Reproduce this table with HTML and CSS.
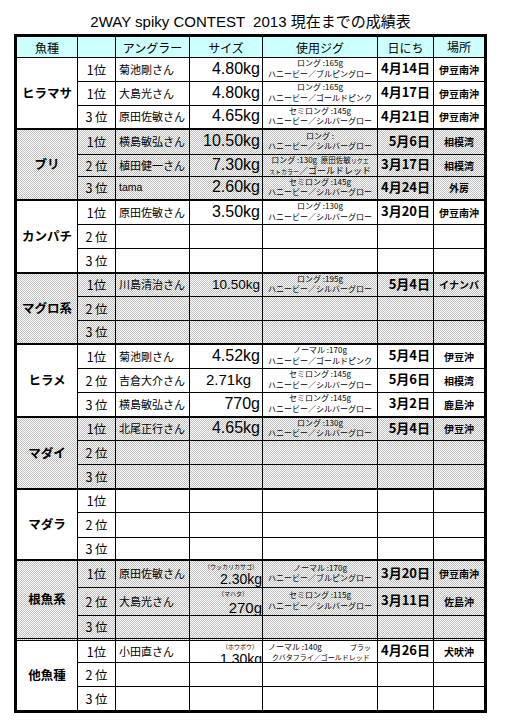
FILE: index.html
```html
<!DOCTYPE html>
<html lang="ja">
<head>
<meta charset="utf-8">
<title>2WAY spiky CONTEST 2013</title>
<link rel="stylesheet" href="styles.css">
</head>
<body>
<div class="page">
  <h1 class="title">2WAY spiky CONTEST  2013 現在までの成績表</h1>
  <div class="sheet">
    <div class="c hd">魚種</div>
    <div class="c hd"></div>
    <div class="c hd">アングラー</div>
    <div class="c hd">サイズ</div>
    <div class="c hd">使用ジグ</div>
    <div class="c hd">日にち</div>
    <div class="c hd pl">場所</div>

    <div class="grp">
      <div class="c fish">ヒラマサ</div>
      <div class="c rk">1位</div><div class="c nm">菊池剛さん</div><div class="c sz">4.80kg</div><div class="c jg"><span>ロング :165g</span><span>ハニービー／ブルピングロー</span></div><div class="c dt">4月14日</div><div class="c pl">伊豆南沖</div>
      <div class="c rk">1位</div><div class="c nm">大島光さん</div><div class="c sz">4.80kg</div><div class="c jg"><span>ロング :165g</span><span>ハニービー／ゴールドピンク</span></div><div class="c dt">4月17日</div><div class="c pl">伊豆南沖</div>
      <div class="c rk">3 位</div><div class="c nm">原田佐敏さん</div><div class="c sz">4.65kg</div><div class="c jg"><span>セミロング :145g</span><span>ハニービー／シルバーグロー</span></div><div class="c dt">4月21日</div><div class="c pl">伊豆南沖</div>
    </div>

    <div class="grp shade">
      <div class="c fish">ブリ</div>
      <div class="c rk">1位</div><div class="c nm">横島敏弘さん</div><div class="c sz">10.50kg</div><div class="c jg"><span>ロング :</span><span>ハニービー／シルバーグロー</span></div><div class="c dt">5月6日</div><div class="c pl">相模湾</div>
      <div class="c rk">2 位</div><div class="c nm">植田健一さん</div><div class="c sz">7.30kg</div><div class="c jg tight"><span class="req">ロング :130g  <i>原田佐敏</i><small>リクエ</small></span><span><small>ストカラー</small><big>／ゴールドレッド</big></span></div><div class="c dt">3月17日</div><div class="c pl">相模湾</div>
      <div class="c rk">3 位</div><div class="c nm lat">tama</div><div class="c sz">2.60kg</div><div class="c jg"><span>セミロング :145g</span><span>ハニービー／シルバーグロー</span></div><div class="c dt">4月24日</div><div class="c pl">外房</div>
    </div>

    <div class="grp">
      <div class="c fish">カンパチ</div>
      <div class="c rk">1位</div><div class="c nm">原田佐敏さん</div><div class="c sz">3.50kg</div><div class="c jg"><span>ロング :130g</span><span>ハニービー／シルバーグロー</span></div><div class="c dt">3月20日</div><div class="c pl">伊豆南沖</div>
      <div class="c rk">2 位</div><div class="c nm"></div><div class="c sz"></div><div class="c jg"></div><div class="c dt"></div><div class="c pl"></div>
      <div class="c rk">3 位</div><div class="c nm"></div><div class="c sz"></div><div class="c jg"></div><div class="c dt"></div><div class="c pl"></div>
    </div>

    <div class="grp shade">
      <div class="c fish">マグロ系</div>
      <div class="c rk">1位</div><div class="c nm">川島清治さん</div><div class="c sz sm">10.50kg</div><div class="c jg"><span>ロング :195g</span><span>ハニービー／シルバーグロー</span></div><div class="c dt">5月4日</div><div class="c pl">イナンバ</div>
      <div class="c rk">2 位</div><div class="c nm"></div><div class="c sz"></div><div class="c jg"></div><div class="c dt"></div><div class="c pl"></div>
      <div class="c rk">3 位</div><div class="c nm"></div><div class="c sz"></div><div class="c jg"></div><div class="c dt"></div><div class="c pl"></div>
    </div>

    <div class="grp">
      <div class="c fish">ヒラメ</div>
      <div class="c rk">1位</div><div class="c nm">菊池剛さん</div><div class="c sz">4.52kg</div><div class="c jg"><span>ノーマル :170g</span><span>ハニービー／ゴールドピンク</span></div><div class="c dt">5月4日</div><div class="c pl">伊豆沖</div>
      <div class="c rk">2 位</div><div class="c nm">吉倉大介さん</div><div class="c sz md">2.71kg</div><div class="c jg"><span>セミロング :145g</span><span>ハニービー／シルバーグロー</span></div><div class="c dt">5月6日</div><div class="c pl">相模湾</div>
      <div class="c rk">3 位</div><div class="c nm">横島敏弘さん</div><div class="c sz">770g</div><div class="c jg"><span>セミロング :145g</span><span>ハニービー／シルバーグロー</span></div><div class="c dt">3月2日</div><div class="c pl">鹿島沖</div>
    </div>

    <div class="grp shade">
      <div class="c fish">マダイ</div>
      <div class="c rk">1位</div><div class="c nm">北尾正行さん</div><div class="c sz">4.65kg</div><div class="c jg"><span>ロング :130g</span><span>ハニービー／シルバーグロー</span></div><div class="c dt">5月4日</div><div class="c pl">伊豆沖</div>
      <div class="c rk">2 位</div><div class="c nm"></div><div class="c sz"></div><div class="c jg"></div><div class="c dt"></div><div class="c pl"></div>
      <div class="c rk">3 位</div><div class="c nm"></div><div class="c sz"></div><div class="c jg"></div><div class="c dt"></div><div class="c pl"></div>
    </div>

    <div class="grp">
      <div class="c fish">マダラ</div>
      <div class="c rk">1位</div><div class="c nm"></div><div class="c sz"></div><div class="c jg"></div><div class="c dt"></div><div class="c pl"></div>
      <div class="c rk">2 位</div><div class="c nm"></div><div class="c sz"></div><div class="c jg"></div><div class="c dt"></div><div class="c pl"></div>
      <div class="c rk">3 位</div><div class="c nm"></div><div class="c sz"></div><div class="c jg"></div><div class="c dt"></div><div class="c pl"></div>
    </div>

    <div class="grp shade dbl">
      <div class="c fish">根魚系</div>
      <div class="c rk">1位</div><div class="c nm">原田佐敏さん</div><div class="c sz note"><span class="ann">（ウッカリカサゴ）</span><span class="v">2.30kg</span></div><div class="c jg"><span>ノーマル :170g</span><span>ハニービー／ブルピングロー</span></div><div class="c dt">3月20日</div><div class="c pl">伊豆南沖</div>
      <div class="c rk">2 位</div><div class="c nm">大島光さん</div><div class="c sz note"><span class="ann mid">（マハタ）</span><span class="v big">270g</span></div><div class="c jg"><span>セミロング :115g</span><span>ハニービー／シルバーグロー</span></div><div class="c dt">3月11日</div><div class="c pl">佐島沖</div>
      <div class="c rk">3 位</div><div class="c nm"></div><div class="c sz"></div><div class="c jg"></div><div class="c dt"></div><div class="c pl"></div>
    </div>

    <div class="grp last">
      <div class="c fish">他魚種</div>
      <div class="c rk">1位</div><div class="c nm">小田直さん</div><div class="c sz note"><span class="ann">（ホウボウ）</span><span class="v low">1.30kg</span></div><div class="c jg left tight"><span class="l1"><span>ノーマル :140g</span><span class="tiny">ブラッ</span></span><span class="l2">クバタフライ／ゴールドレッド</span></div><div class="c dt">4月26日</div><div class="c pl">犬吠沖</div>
      <div class="c rk">2 位</div><div class="c nm"></div><div class="c sz"></div><div class="c jg"></div><div class="c dt"></div><div class="c pl"></div>
      <div class="c rk">3 位</div><div class="c nm"></div><div class="c sz"></div><div class="c jg"></div><div class="c dt"></div><div class="c pl"></div>
    </div>
  </div>
</div>
</body>
</html>
```

FILE: styles.css
```css
* { box-sizing: border-box; }

body {
  margin: 0;
  background: #fff;
  color: #000;
  font-family: "Noto Sans CJK JP", sans-serif;
}

.page {
  padding-left: 14px;
  width: 487px;
}

.title {
  margin: 0;
  height: 34px;
  padding-top: 13px;
  font: normal 15px/18px "Liberation Sans", "Noto Sans CJK JP", sans-serif;
  text-align: center;
  white-space: pre;
}

.sheet {
  display: grid;
  width: 473px;
  border: 3px solid #000;
  grid-template-columns: 61px 38px 74px 73px 115px 56px 50px;
  grid-template-rows:
    21px
    24px 24px 24px
    25px 22px 24px
    24px 24px 25px
    23px 24px 24px
    24px 24px 25px
    23px 24px 25px
    23px 25px 23px
    27px 28px 25px
    22px 24px 23px;
}

.grp { display: contents; }

.c {
  display: flex;
  align-items: center;
  min-width: 0;
  overflow: hidden;
  border-right: 1px solid #000;
  border-bottom: 1px solid #000;
  white-space: nowrap;
}

.pl { border-right: 0; }

.grp > .fish,
.grp > :nth-child(n+14) { border-bottom-width: 2px; }

.grp.dbl > .fish,
.grp.dbl > :nth-child(n+14) { border-bottom: 3px double #000; }

.grp.last > .fish,
.grp.last > :nth-child(n+14) { border-bottom: 0; }

.shade > .c {
  background: repeating-conic-gradient(#bdbdbd 0 25%, #fff 0 50%) 0 0 / 2px 2px;
}

.hd {
  background: #ccffff;
  justify-content: center;
  font-size: 12px;
}

.fish {
  grid-row: span 3;
  justify-content: center;
  font-size: 12.5px;
  font-weight: 700;
  padding-bottom: 2px;
}

.rk {
  justify-content: center;
  font-size: 12.5px;
  padding-bottom: 1px;
}

.nm {
  font-size: 11px;
  padding-left: 3px;
  padding-bottom: 2px;
}

.nm.lat {
  font-family: "Liberation Sans", sans-serif;
  font-size: 10.5px;
}

.sz {
  justify-content: flex-end;
  padding-right: 2px;
  padding-bottom: 2px;
  font-family: "Liberation Sans", sans-serif;
  font-size: 16px;
}

.sz.sm { font-size: 13.5px; }
.sz.md { font-size: 15px; padding-right: 11px; }

.sz.note {
  flex-direction: column;
  align-items: flex-end;
  justify-content: flex-start;
  padding: 0;
}

.ann {
  font-family: "Noto Sans CJK JP", sans-serif;
  font-size: 6px;
  line-height: 7px;
  margin-top: 2px;
  margin-right: 4px;
}

.ann.mid { margin-right: 14px; }

.v {
  margin-top: auto;
  margin-bottom: 2px;
  font-size: 14px;
  line-height: 11px;
}

.v.big { font-size: 15px; }
.v.low { margin-bottom: -3px; }

.jg {
  flex-direction: column;
  justify-content: center;
  font-size: 8px;
  line-height: 10.5px;
  padding-bottom: 2px;
}

.jg.tight {
  line-height: 10px;
  padding-bottom: 0;
}

.jg small { font-size: 6px; }
.jg big { font-size: 9px; }
.jg i { font-style: normal; font-size: 7.5px; }

.req { white-space: pre; }

.jg.left { align-items: stretch; }

.l1 {
  display: flex;
  justify-content: space-between;
  padding: 0 6px 0 5px;
}

.tiny { font-size: 7px; }

.l2 {
  font-size: 7px;
  padding-left: 9px;
}

.dt {
  justify-content: flex-end;
  padding-right: 3px;
  padding-bottom: 4px;
  font-size: 13px;
  font-weight: 700;
}

.pl {
  justify-content: center;
  font-size: 10px;
  font-weight: 700;
  padding-bottom: 1px;
}

.hd.pl { font-size: 12px; font-weight: 400; }
```
